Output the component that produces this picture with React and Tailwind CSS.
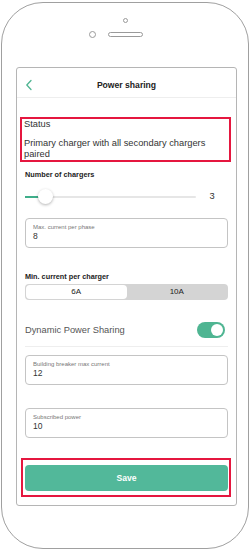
import { useState } from 'react';

function Field({ label, value }) {
  return (
    <div className="h-[30px] rounded-[4px] border border-[#c4c4c4] px-[7px] pt-[4px]">
      <div className="text-[6px] leading-[8px] text-[#777]">{label}</div>
      <div className="text-[8.5px] leading-[10px] text-[#333]">{value}</div>
    </div>
  );
}

export default function App() {
  const [seg, setSeg] = useState('6A');
  const [dps, setDps] = useState(true);

  return (
    <div className="w-[250px] h-[550px] bg-white px-[1px] pt-[2px] font-['Liberation_Sans',Arial,sans-serif]">
      <div className="h-[547px] w-[248px] rounded-[42px] border border-[#a0a0a0]">
        {/* camera + speaker */}
        <div className="flex flex-col items-center pt-[15px]">
          <div className="h-[5px] w-[5px] rounded-full border border-[#9a9a9a]" />
          <div className="mt-[8px] flex items-center gap-[12px]">
            <div className="h-[7px] w-[7px] rounded-full border border-[#9a9a9a]" />
            <div className="h-[5px] w-[35px] rounded-full border border-[#9a9a9a]" />
            <div className="h-[7px] w-[7px]" />
          </div>
        </div>

        {/* screen */}
        <div className="ml-[14px] mt-[29px] flex h-[439px] w-[221px] flex-col rounded-[3px] border border-[#b5b5b5]">
          <div className="flex h-[30px] items-center border-b border-[#eeeeee] px-[8px] pt-[5px]">
            <svg width="8" height="12" viewBox="0 0 8 12" fill="none">
              <path d="M6 1.5 L1.8 6 L6 10.5" stroke="#4fb592" strokeWidth="1.3" strokeLinecap="round" strokeLinejoin="round" />
            </svg>
            <div className="flex-1 pr-[8px] text-center text-[8.6px] font-bold text-[#222]">Power sharing</div>
          </div>

          <div className="flex flex-1 flex-col px-[8px]">
            <div className="ml-[-5px] mr-[-3px] mt-[19px] border-2 border-[#e5173f] px-[2px] text-[9.3px] leading-[11px] text-[#333]">
              <div>Status</div>
              <div className="mt-[8px]">Primary charger with all secondary chargers paired</div>
            </div>

            <div className="mt-[8px] text-[7.3px] font-bold leading-[10px] text-[#222]">Number of chargers</div>

            <div className="mt-[9px] flex h-[16px] items-center">
              <div className="relative h-[2px] flex-1 rounded bg-[#e6e6e6]">
                <div className="absolute left-0 top-0 h-[2px] w-[15px] bg-[#3fae8a]" />
                <div className="absolute left-[13px] top-[-7px] h-[15px] w-[15px] rounded-full bg-white shadow-[0_1px_3px_rgba(0,0,0,0.3)]" />
              </div>
              <div className="w-[32px] text-center text-[9.3px] text-[#333]">3</div>
            </div>

            <div className="mt-[13px]">
              <Field label="Max. current per phase" value="8" />
            </div>

            <div className="mt-[24px] text-[7.3px] font-bold leading-[10px] text-[#222]">Min. current per charger</div>
            <div className="mt-[2px] flex h-[16px] rounded-[4px] bg-[#d4d4d4] p-[1px]">
              {['6A', '10A'].map((s) => (
                <button
                  key={s}
                  onClick={() => setSeg(s)}
                  className={`flex flex-1 items-center justify-center rounded-[4px] text-[8px] text-[#222] ${seg === s ? 'bg-white' : ''}`}
                >
                  {s}
                </button>
              ))}
            </div>

            <div className="mt-[22px] flex items-center justify-between border-b border-[#eeeeee] pb-[8px]">
              <span className="text-[9.3px] leading-[16px] text-[#555]">Dynamic Power Sharing</span>
              <button
                onClick={() => setDps(!dps)}
                className={`mr-[3px] flex h-[16px] w-[28px] items-center rounded-full p-[2px] ${dps ? 'justify-end bg-[#4fb592]' : 'justify-start bg-[#ccc]'}`}
              >
                <span className="h-[12px] w-[12px] rounded-full bg-white" />
              </button>
            </div>

            <div className="mt-[8px]">
              <Field label="Building breaker max current" value="12" />
            </div>
            <div className="mt-[23px]">
              <Field label="Subscribed power" value="10" />
            </div>

            <div className="ml-[-4px] mr-[-3px] mt-[20px] border-2 border-[#e5173f] py-[4px] pl-[2px] pr-[1px]">
              <button className="h-[26px] w-full rounded-[4px] bg-[#52b89a] text-[8.6px] font-bold text-white">Save</button>
            </div>
          </div>
        </div>
      </div>
    </div>
  );
}
